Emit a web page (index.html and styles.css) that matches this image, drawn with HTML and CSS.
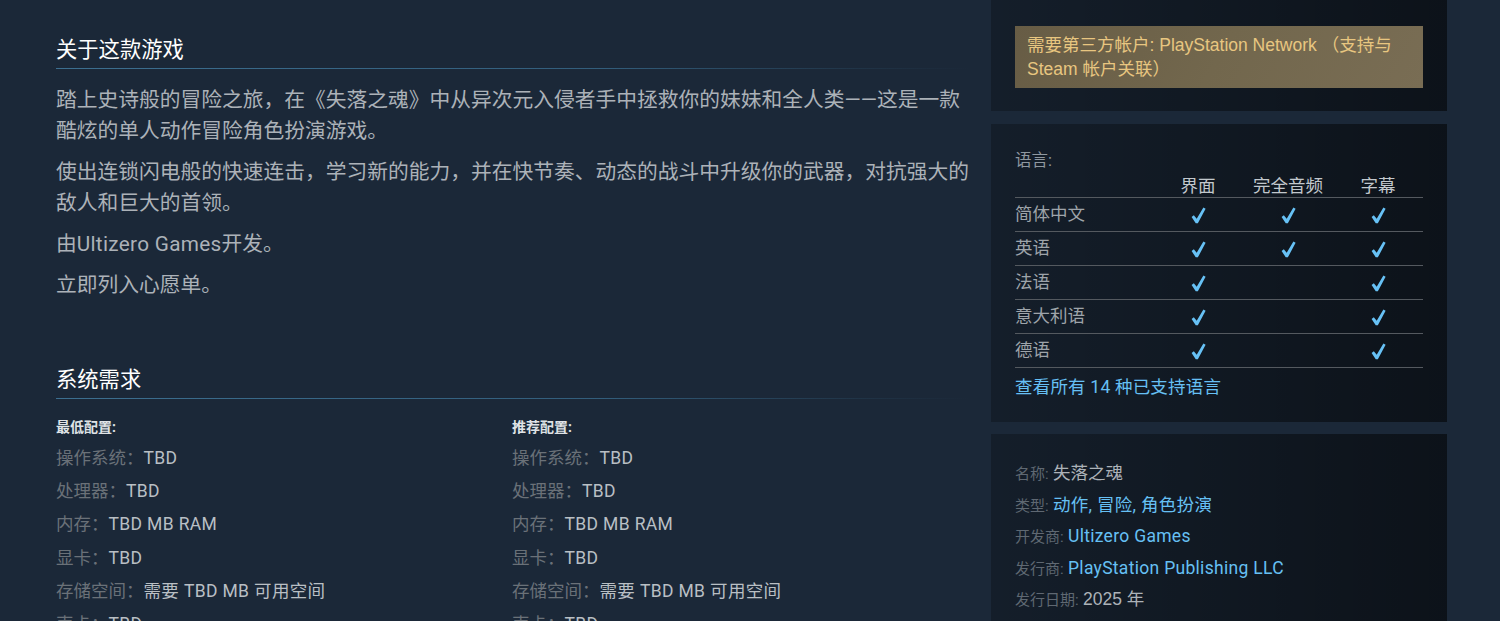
FILE: index.html
```html
<!DOCTYPE html>
<html lang="zh-CN">
<head>
<meta charset="utf-8">
<title>失落之魂</title>
<link rel="stylesheet" href="styles.css">
</head>
<body>
<div class="page">
  <div class="main">
    <section class="about">
      <h2 class="section-title">关于这款游戏</h2>
      <div class="desc">
        <p>踏上史诗般的冒险之旅，在《失落之魂》中从异次元入侵者手中拯救你的妹妹和全人类——这是一款酷炫的单人动作冒险角色扮演游戏。</p>
        <p>使出连锁闪电般的快速连击，学习新的能力，并在快节奏、动态的战斗中升级你的武器，对抗强大的敌人和巨大的首领。</p>
        <p>由<span class="latin">Ultizero Games</span>开发。</p>
        <p class="last">立即列入心愿单。</p>
      </div>
    </section>
    <section class="sysreq">
      <h2 class="section-title">系统需求</h2>
      <div class="req-cols">
        <div class="req-col">
          <div class="req-title">最低配置:</div>
          <ul class="req-list">
            <li><span class="req-lbl">操作系统：</span><span class="req-val">TBD</span></li>
            <li><span class="req-lbl">处理器：</span><span class="req-val">TBD</span></li>
            <li><span class="req-lbl">内存：</span><span class="req-val">TBD MB RAM</span></li>
            <li><span class="req-lbl">显卡：</span><span class="req-val">TBD</span></li>
            <li><span class="req-lbl">存储空间：</span><span class="req-val">需要 TBD MB 可用空间</span></li>
            <li><span class="req-lbl">声卡：</span><span class="req-val">TBD</span></li>
          </ul>
        </div>
        <div class="req-col">
          <div class="req-title">推荐配置:</div>
          <ul class="req-list">
            <li><span class="req-lbl">操作系统：</span><span class="req-val">TBD</span></li>
            <li><span class="req-lbl">处理器：</span><span class="req-val">TBD</span></li>
            <li><span class="req-lbl">内存：</span><span class="req-val">TBD MB RAM</span></li>
            <li><span class="req-lbl">显卡：</span><span class="req-val">TBD</span></li>
            <li><span class="req-lbl">存储空间：</span><span class="req-val">需要 TBD MB 可用空间</span></li>
            <li><span class="req-lbl">声卡：</span><span class="req-val">TBD</span></li>
          </ul>
        </div>
      </div>
    </section>
  </div>

  <aside class="side">
    <div class="block block-notice">
      <div class="notice">需要第三方帐户: PlayStation Network （支持与 Steam 帐户关联）</div>
    </div>

    <div class="block block-lang">
      <div class="lang-title">语言:</div>
      <table class="lang-table">
        <thead>
          <tr><th class="c-name"></th><th>界面</th><th>完全音频</th><th>字幕</th></tr>
        </thead>
        <tbody>
          <tr><td class="c-name">简体中文</td><td><svg class="chk" viewBox="0 0 14 16"><path d="M0.5 9.3 L2.6 7.7 L5.3 11 L11.6 0.5 L13.7 1.7 L6.4 15.4 L4.4 15.4 Z"/></svg></td><td><svg class="chk" viewBox="0 0 14 16"><path d="M0.5 9.3 L2.6 7.7 L5.3 11 L11.6 0.5 L13.7 1.7 L6.4 15.4 L4.4 15.4 Z"/></svg></td><td><svg class="chk" viewBox="0 0 14 16"><path d="M0.5 9.3 L2.6 7.7 L5.3 11 L11.6 0.5 L13.7 1.7 L6.4 15.4 L4.4 15.4 Z"/></svg></td></tr>
          <tr><td class="c-name">英语</td><td><svg class="chk" viewBox="0 0 14 16"><path d="M0.5 9.3 L2.6 7.7 L5.3 11 L11.6 0.5 L13.7 1.7 L6.4 15.4 L4.4 15.4 Z"/></svg></td><td><svg class="chk" viewBox="0 0 14 16"><path d="M0.5 9.3 L2.6 7.7 L5.3 11 L11.6 0.5 L13.7 1.7 L6.4 15.4 L4.4 15.4 Z"/></svg></td><td><svg class="chk" viewBox="0 0 14 16"><path d="M0.5 9.3 L2.6 7.7 L5.3 11 L11.6 0.5 L13.7 1.7 L6.4 15.4 L4.4 15.4 Z"/></svg></td></tr>
          <tr><td class="c-name">法语</td><td><svg class="chk" viewBox="0 0 14 16"><path d="M0.5 9.3 L2.6 7.7 L5.3 11 L11.6 0.5 L13.7 1.7 L6.4 15.4 L4.4 15.4 Z"/></svg></td><td></td><td><svg class="chk" viewBox="0 0 14 16"><path d="M0.5 9.3 L2.6 7.7 L5.3 11 L11.6 0.5 L13.7 1.7 L6.4 15.4 L4.4 15.4 Z"/></svg></td></tr>
          <tr><td class="c-name">意大利语</td><td><svg class="chk" viewBox="0 0 14 16"><path d="M0.5 9.3 L2.6 7.7 L5.3 11 L11.6 0.5 L13.7 1.7 L6.4 15.4 L4.4 15.4 Z"/></svg></td><td></td><td><svg class="chk" viewBox="0 0 14 16"><path d="M0.5 9.3 L2.6 7.7 L5.3 11 L11.6 0.5 L13.7 1.7 L6.4 15.4 L4.4 15.4 Z"/></svg></td></tr>
          <tr><td class="c-name">德语</td><td><svg class="chk" viewBox="0 0 14 16"><path d="M0.5 9.3 L2.6 7.7 L5.3 11 L11.6 0.5 L13.7 1.7 L6.4 15.4 L4.4 15.4 Z"/></svg></td><td></td><td><svg class="chk" viewBox="0 0 14 16"><path d="M0.5 9.3 L2.6 7.7 L5.3 11 L11.6 0.5 L13.7 1.7 L6.4 15.4 L4.4 15.4 Z"/></svg></td></tr>
        </tbody>
      </table>
      <a class="lang-all" href="#">查看所有 14 种已支持语言</a>
    </div>

    <div class="block block-info">
      <div class="info-row"><span class="info-lbl">名称:</span> <span class="info-val">失落之魂</span></div>
      <div class="info-row"><span class="info-lbl">类型:</span> <a class="info-link" href="#">动作</a><span class="info-link">, </span><a class="info-link" href="#">冒险</a><span class="info-link">, </span><a class="info-link" href="#">角色扮演</a></div>
      <div class="info-row"><span class="info-lbl">开发商:</span> <a class="info-link" href="#">Ultizero Games</a></div>
      <div class="info-row"><span class="info-lbl">发行商:</span> <a class="info-link" href="#">PlayStation Publishing LLC</a></div>
      <div class="info-row"><span class="info-lbl">发行日期:</span> <span class="info-val date">2025 年</span></div>
    </div>
  </aside>
</div>
</body>
</html>
```

FILE: styles.css
```css
html, body {
  margin: 0;
  padding: 0;
}

body {
  background: #1b2838;
  height: 621px;
  overflow: hidden;
  font-family: Roboto, "Noto Sans CJK SC", sans-serif;
  color: #acb2b8;
}

.page {
  display: flex;
  gap: 19px;
  padding-left: 56px;
}

.main {
  width: 916px;
  flex: none;
  padding-top: 37px;
}

.section-title {
  margin: 0;
  width: 914px;
  font-size: 21.3px;
  line-height: 26px;
  font-weight: 400;
  color: #ffffff;
  padding-bottom: 6px;
  background-image: linear-gradient(to right, #3c6f90 0%, #325d7b 60%, rgba(46, 85, 112, 0.25) 88%, rgba(46, 85, 112, 0) 100%);
  background-repeat: no-repeat;
  background-position: left bottom;
  background-size: 100% 1px;
}

.desc {
  margin-top: 16px;
}

.desc p {
  margin: 0 0 10px;
  font-size: 20.75px;
  line-height: 31px;
  color: #acb2b8;
}

.desc p.last {
  margin-bottom: 0;
}

.latin {
  letter-spacing: 0.3px;
}

.sysreq {
  margin-top: 66px;
}

.req-cols {
  display: grid;
  grid-template-columns: 456px 456px;
  margin-top: 18px;
}

.req-title {
  font-size: 14px;
  line-height: 20px;
  font-weight: 700;
  color: #dfe3e6;
}

.req-list {
  list-style: none;
  margin: 5px 0 0;
  padding: 0;
}

.req-list li {
  font-size: 17.5px;
  line-height: 33.2px;
  height: 33.2px;
  white-space: nowrap;
}

.req-lbl {
  color: #6a7178;
}

.req-val {
  color: #b9bfc4;
  letter-spacing: 0.35px;
}

/* Right column */
.side {
  width: 456px;
  flex: none;
}

.block {
  background: linear-gradient(to right, rgba(0, 0, 0, 0.25), rgba(0, 0, 0, 0.55));
  padding: 0 24px;
}

.block-notice {
  padding-top: 26px;
  padding-bottom: 23px;
  margin-bottom: 13px;
}

.notice {
  background: linear-gradient(120deg, #675c45 0%, #72674d 50%, #796d54 100%);
  color: #e8c680;
  font-family: "Liberation Sans", "Noto Sans CJK SC", sans-serif;
  font-size: 17.5px;
  line-height: 24px;
  padding: 7px 12px;
}

.block-lang {
  padding-top: 25px;
  padding-bottom: 23px;
  margin-bottom: 12px;
}

.lang-title {
  font-size: 16.5px;
  line-height: 24px;
  color: #8f98a0;
}

.lang-table {
  width: 408px;
  margin-top: 2px;
  border-collapse: collapse;
  table-layout: fixed;
}

.lang-table th,
.lang-table td {
  padding: 0;
  width: 90px;
  text-align: center;
  font-size: 17.5px;
  font-weight: 400;
}

.lang-table .c-name {
  width: 138px;
  text-align: left;
}

.lang-table th {
  height: 22px;
  line-height: 22px;
  vertical-align: bottom;
  color: #c2c8cd;
  border-bottom: 1px solid #54595f;
}

.lang-table td {
  height: 33px;
  line-height: 33px;
  vertical-align: middle;
  color: #9ea4aa;
  border-bottom: 1px solid #54595f;
}

.chk {
  display: block;
  width: 15px;
  height: 17px;
  margin: 1px auto 0;
  fill: #67c1f5;
}

.lang-all {
  display: block;
  margin-top: 7px;
  font-size: 17.5px;
  line-height: 24px;
  color: #66c0f4;
  text-decoration: none;
  letter-spacing: 0.2px;
}

.block-info {
  padding-top: 24px;
  padding-bottom: 24px;
}

.info-row {
  font-size: 17.5px;
  line-height: 31.5px;
  height: 31.5px;
  white-space: nowrap;
}

.info-lbl {
  font-size: 15px;
  color: #5f6872;
}

.info-val {
  color: #acb2b8;
}

.info-val.date {
  font-family: "Liberation Sans", "Noto Sans CJK SC", sans-serif;
}

.info-link {
  color: #66c0f4;
  text-decoration: none;
  letter-spacing: 0.3px;
}
```
